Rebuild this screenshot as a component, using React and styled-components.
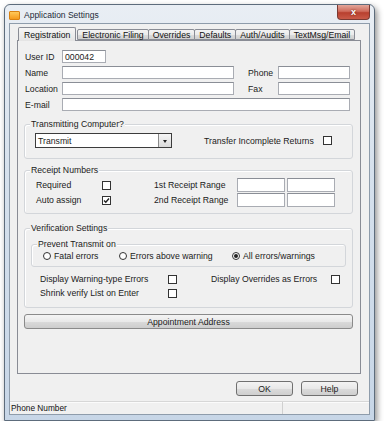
import React from "react";
import styled, { createGlobalStyle } from "styled-components";

const GlobalStyle = createGlobalStyle`
  html, body { margin: 0; padding: 0; background: #ffffff; }
  body {
    font-family: "Liberation Sans", Arial, sans-serif;
    font-size: 8.7px;
    color: #1b1b1b;
  }
  * { box-sizing: border-box; }
`;

const Window = styled.div`
  width: 371px;
  height: 417px;
  margin: 4px 0 0 4px;
  display: flex;
  flex-direction: column;
  border: 1px solid #5d6c7c;
  border-radius: 6px 6px 0 0;
  padding: 0 4px 5px;
  background: linear-gradient(180deg, #e9eef4 0%, #d6e1ed 40%, #c7d6e7 100%);
  box-shadow: 2px 3px 6px rgba(0, 0, 0, 0.45);
`;

const TitleBar = styled.div`
  height: 18px;
  display: flex;
  align-items: center;
  gap: 4px;
`;

const AppIcon = styled.span`
  width: 11px;
  height: 9px;
  margin-top: 2px;
  border-radius: 1px;
  background: linear-gradient(180deg, #ffc95a 0%, #f59a1c 100%);
  border: 1px solid #d98212;
`;

const TitleText = styled.span`
  font-size: 8.5px;
  color: #1e2a38;
  margin-top: 2px;
`;

const CloseButton = styled.div`
  margin-left: auto;
  align-self: flex-start;
  width: 33px;
  height: 15px;
  border: 1px solid #7a3a33;
  border-top: none;
  border-radius: 0 0 4px 4px;
  background: linear-gradient(180deg, #e3a69a 0%, #cf6b5b 45%, #b8402f 55%, #c95a48 100%);
  display: flex;
  align-items: center;
  justify-content: center;
  color: #fff;
  font-weight: bold;
  font-size: 9px;
  text-shadow: 0 0 2px #5a1a10;
`;

const Client = styled.div`
  flex: 1;
  display: flex;
  flex-direction: column;
  background: #f0f0f0;
  border: 1px solid #8e9cab;
`;

const TabStrip = styled.div`
  display: flex;
  align-items: flex-end;
  height: 13px;
  margin: 3px 0 0 8px;
  position: relative;
  z-index: 1;
`;

const Tab = styled.div`
  height: ${(p) => (p.$active ? "14px" : "11px")};
  margin-bottom: ${(p) => (p.$active ? "-1px" : "0")};
  margin-right: ${(p) => (p.$active ? "1px" : "-1px")};
  padding: 0 ${(p) => (p.$active ? "5px" : "4px")};
  display: flex;
  align-items: center;
  border: 1px solid #898c95;
  border-bottom: ${(p) => (p.$active ? "none" : "1px solid #898c95")};
  border-radius: 2px 2px 0 0;
  background: ${(p) =>
    p.$active
      ? "linear-gradient(180deg, #f6f6f6 0%, #e4e4e4 100%)"
      : "linear-gradient(180deg, #f3f3f3 0%, #ebebeb 50%, #dcdcdc 51%, #cfcfcf 100%)"};
  color: #111;
  white-space: nowrap;
`;

const Panel = styled.div`
  width: 344px;
  height: 334px;
  margin-left: 7px;
  border: 1px solid #898c95;
  background: #f0f0f0;
  padding-top: 9px;
  display: flex;
  flex-direction: column;
`;

const FieldGrid = styled.div`
  display: grid;
  grid-template-columns: 37px 172px 44px 72px;
  grid-auto-rows: 13px;
  row-gap: 3px;
  padding-left: 7px;
`;

const Label = styled.span`
  display: flex;
  align-items: center;
  padding-left: ${(p) => p.$indent || 0}px;
  white-space: nowrap;
`;

const TextBox = styled.div`
  width: ${(p) => (p.$w ? `${p.$w}px` : "auto")};
  height: ${(p) => p.$h || 13}px;
  grid-column: ${(p) => p.$span || "auto"};
  background: #fff;
  border: 1px solid #a9acb3;
  border-top-color: #8a8e96;
  padding: 0 2px;
  display: flex;
  align-items: center;
`;

const Group = styled.div`
  position: relative;
  margin: ${(p) => p.$top}px ${(p) => p.$right ?? 7}px 0 ${(p) => p.$left ?? 6}px;
  border: 1px solid #d3d6da;
  border-radius: 3px;
  box-shadow: inset 1px 1px 0 #ffffff;
  padding: ${(p) => p.$pad};
`;

const Legend = styled.span`
  position: absolute;
  top: -6px;
  left: 5px;
  padding: 0 1px;
  background: #f0f0f0;
  line-height: 10px;
  white-space: nowrap;
`;

const TransmitRow = styled.div`
  display: flex;
  align-items: center;
`;

const Select = styled.div`
  width: 137px;
  height: 15px;
  display: flex;
  background: #fff;
  border: 1px solid #3c3c3c;
`;

const SelectValue = styled.span`
  flex: 1;
  display: flex;
  align-items: center;
  padding-left: 2px;
`;

const SelectArrow = styled.span`
  width: 13px;
  border-left: 1px solid #8a8a8a;
  background: linear-gradient(180deg, #f6f6f6 0%, #dadada 100%);
  display: flex;
  align-items: center;
  justify-content: center;
  &::after {
    content: "";
    border-left: 2.5px solid transparent;
    border-right: 2.5px solid transparent;
    border-top: 3px solid #222;
    margin-top: 2px;
  }
`;

const Check = styled.span`
  width: 9px;
  height: 9px;
  border: 1px solid #333;
  background: #fff;
  display: inline-flex;
  align-items: center;
  justify-content: center;
  flex: none;
`;

const ReceiptGrid = styled.div`
  display: grid;
  grid-template-columns: 66px 52px 83px 50px 48px;
  grid-template-rows: 14px 14px;
  row-gap: 1px;
  align-items: center;
`;

const RadioRow = styled.div`
  display: grid;
  grid-template-columns: 76px 113px auto;
  height: 11px;
  align-items: center;
`;

const RadioItem = styled.span`
  display: flex;
  align-items: center;
  gap: 3px;
  white-space: nowrap;
`;

const Radio = styled.span`
  width: 8px;
  height: 8px;
  border-radius: 50%;
  border: 1px solid #333;
  background: #fff;
  display: inline-flex;
  align-items: center;
  justify-content: center;
  &::after {
    content: "";
    width: 4px;
    height: 4px;
    border-radius: 50%;
    background: ${(p) => (p.$on ? "#222" : "transparent")};
  }
`;

const OptionGrid = styled.div`
  display: grid;
  grid-template-columns: 128px 43px 120px auto;
  grid-auto-rows: 14px;
  align-items: center;
  padding-left: 15px;
  margin-top: 5px;
`;

const WideButton = styled.div`
  margin: 6px 7px 0 6px;
  height: 15px;
  border: 1px solid #8a8a8a;
  border-radius: 3px;
  background: linear-gradient(180deg, #f4f4f4 0%, #e9e9e9 50%, #dadada 51%, #cdcdcd 100%);
  display: flex;
  align-items: center;
  justify-content: center;
`;

const ButtonRow = styled.div`
  display: flex;
  justify-content: flex-end;
  gap: 8px;
  margin-top: 7px;
  padding-right: 11px;
`;

const DialogButton = styled.div`
  width: 57px;
  height: 15px;
  border: 1px solid #707070;
  border-radius: 3px;
  background: linear-gradient(180deg, #f3f3f3 0%, #e8e8e8 50%, #dbdbdb 51%, #cfcfcf 100%);
  display: flex;
  align-items: center;
  justify-content: center;
`;

const StatusBar = styled.div`
  margin-top: auto;
  height: 13px;
  display: flex;
  border-top: 1px solid #d7d7d7;
  box-shadow: inset 0 1px 0 #fbfbfb;
`;

const StatusPane = styled.div`
  width: ${(p) => (p.$w ? `${p.$w}px` : "auto")};
  flex: ${(p) => (p.$w ? "none" : 1)};
  display: flex;
  align-items: center;
  padding-left: 1px;
  font-size: 8.3px;
  color: #111;
  border-left: ${(p) => (p.$divided ? "1px solid #d0d0d0" : "none")};
  margin-left: ${(p) => (p.$divided ? "1px" : 0)};
`;

const tabs = ["Registration", "Electronic Filing", "Overrides", "Defaults", "Auth/Audits", "TextMsg/Email"];

function CheckMark() {
  return (
    <svg width="7" height="7" viewBox="0 0 7 7">
      <path d="M1 3.5 L2.8 5.3 L6 1.5" fill="none" stroke="#222" strokeWidth="1.4" />
    </svg>
  );
}

export default function App() {
  return (
    <>
      <GlobalStyle />
      <Window>
        <TitleBar>
          <AppIcon />
          <TitleText>Application Settings</TitleText>
          <CloseButton>x</CloseButton>
        </TitleBar>
        <Client>
          <TabStrip>
            {tabs.map((t, i) => (
              <Tab key={t} $active={i === 0}>
                {t}
              </Tab>
            ))}
          </TabStrip>
          <Panel>
            <FieldGrid>
              <Label>User ID</Label>
              <TextBox $w={44} $span="2 / -1">000042</TextBox>
              <Label>Name</Label>
              <TextBox />
              <Label $indent={14}>Phone</Label>
              <TextBox />
              <Label>Location</Label>
              <TextBox />
              <Label $indent={14}>Fax</Label>
              <TextBox />
              <Label>E-mail</Label>
              <TextBox $span="2 / -1" />
            </FieldGrid>

            <Group $top={13} $pad="8px 0 10px 10px">
              <Legend>Transmitting Computer?</Legend>
              <TransmitRow>
                <Select>
                  <SelectValue>Transmit</SelectValue>
                  <SelectArrow />
                </Select>
                <Label style={{ marginLeft: 32 }}>Transfer Incomplete Returns</Label>
                <Check style={{ marginLeft: 9 }} />
              </TransmitRow>
            </Group>

            <Group $top={11} $pad="7px 0 6px 11px">
              <Legend>Receipt Numbers</Legend>
              <ReceiptGrid>
                <Label>Required</Label>
                <Check />
                <Label>1st Receipt Range</Label>
                <TextBox $w={48} $h={14} />
                <TextBox $w={48} $h={14} />
                <Label>Auto assign</Label>
                <Check>
                  <CheckMark />
                </Check>
                <Label>2nd Receipt Range</Label>
                <TextBox $w={48} $h={14} />
                <TextBox $w={48} $h={14} />
              </ReceiptGrid>
            </Group>

            <Group $top={14} $pad="15px 0 7px 0">
              <Legend>Verification Settings</Legend>
              <Group $top={0} $left={6} $right={6} $pad="5px 0 5px 11px">
                <Legend>Prevent Transmit on</Legend>
                <RadioRow>
                  <RadioItem>
                    <Radio />
                    Fatal errors
                  </RadioItem>
                  <RadioItem>
                    <Radio />
                    Errors above warning
                  </RadioItem>
                  <RadioItem>
                    <Radio $on />
                    All errors/warnings
                  </RadioItem>
                </RadioRow>
              </Group>
              <OptionGrid>
                <Label>Display Warning-type Errors</Label>
                <Check />
                <Label>Display Overrides as Errors</Label>
                <Check />
                <Label>Shrink verify List on Enter</Label>
                <Check />
              </OptionGrid>
            </Group>

            <WideButton>Appointment Address</WideButton>
          </Panel>

          <ButtonRow>
            <DialogButton>OK</DialogButton>
            <DialogButton>Help</DialogButton>
          </ButtonRow>

          <StatusBar>
            <StatusPane $w={271}>Phone Number</StatusPane>
            <StatusPane $divided />
          </StatusBar>
        </Client>
      </Window>
    </>
  );
}
